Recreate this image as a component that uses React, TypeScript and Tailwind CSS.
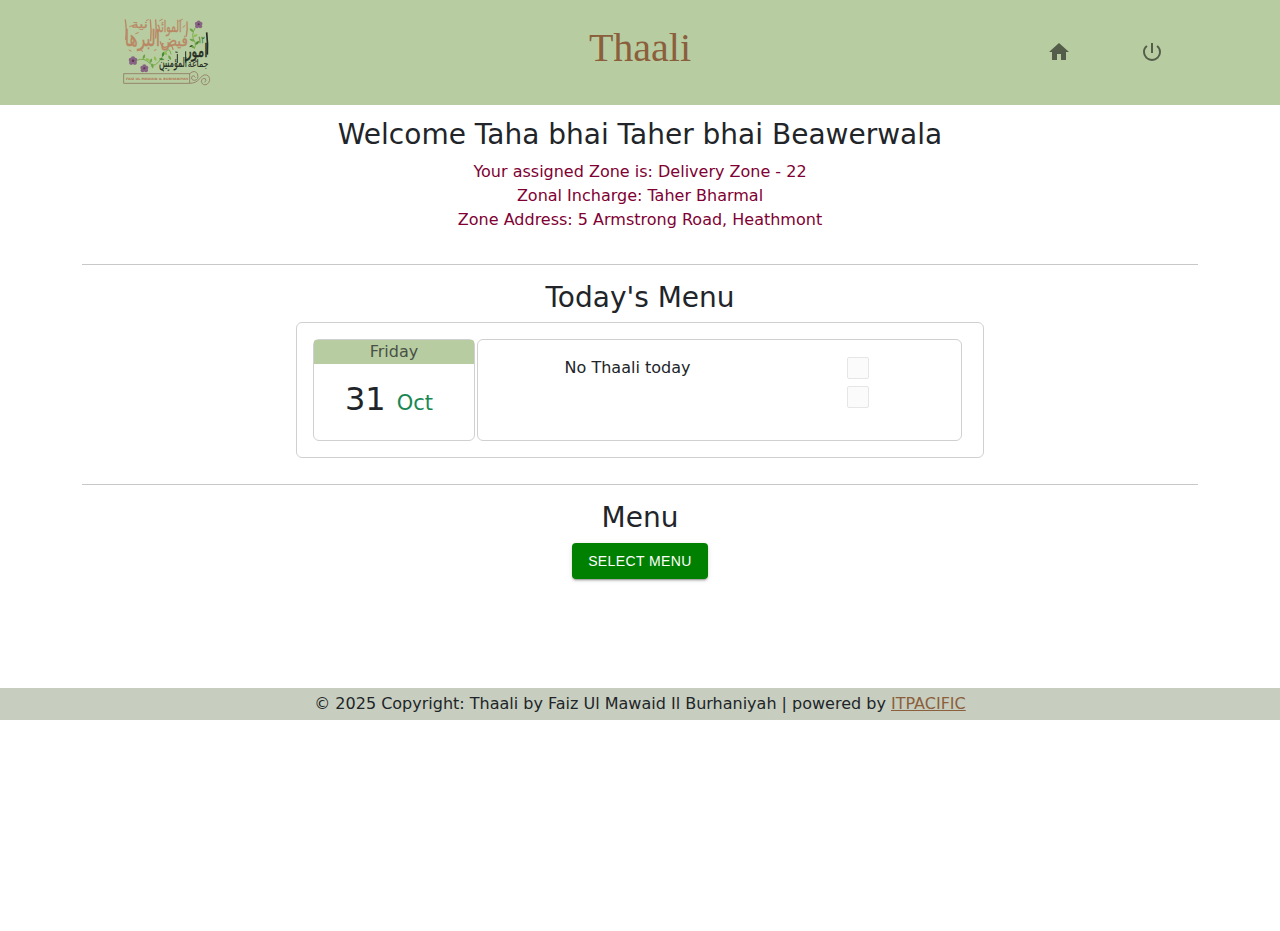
import type { ReactNode } from "react";
import { MdHome, MdPowerSettingsNew } from "react-icons/md";

function Flower({ x, y, s = 1 }: { x: number; y: number; s?: number }) {
  return (
    <g transform={`translate(${x} ${y}) scale(${s})`}>
      <g fill="#876482">
        <circle cx="0" cy="-6" r="6" />
        <circle cx="6" cy="-2" r="6" />
        <circle cx="5" cy="6" r="6" />
        <circle cx="-5" cy="6" r="6" />
        <circle cx="-6" cy="-2" r="6" />
      </g>
      <circle r="3.4" fill="#5d3558" />
    </g>
  );
}

function Leaf({ x, y, r, fill = "#6ba345" }: { x: number; y: number; r: number; fill?: string }) {
  return <path d="M0 0Q7 -8 0 -16Q-7 -8 0 0Z" fill={fill} transform={`translate(${x} ${y}) rotate(${r})`} />;
}

function Word({ x, y, w, size, fill, sy = 1, weight = 0.8, children }: { x: number; y: number; w: number; size: number; fill: string; sy?: number; weight?: number; children: ReactNode }) {
  return (
    <text
      transform={`translate(${x} ${y}) scale(1 ${sy})`}
      fontSize={size}
      fill={fill}
      stroke={fill}
      strokeWidth={weight}
      textAnchor="middle"
      textLength={w}
      lengthAdjust="spacingAndGlyphs"
      direction="rtl"
    >
      {children}
    </text>
  );
}

function Logo() {
  return (
    <svg viewBox="0 0 315 255" className="h-[85px] w-[105px]" fontFamily="'DejaVu Sans', sans-serif">
      <Word x={82} y={108} w={106} size={46} sy={1.45} fill="#ba8764">البرها</Word>
      <Word x={74} y={55} w={50} size={32} sy={1.05} fill="#ba8764">نية</Word>
      <Word x={162} y={66} w={76} size={36} sy={1.35} fill="#ba8764">الموائد</Word>
      <Word x={178} y={108} w={82} size={42} sy={1.15} fill="#ba8764">فيض</Word>
      <g fill="none" stroke="#ba8764" strokeWidth="4" strokeLinecap="round">
        <path d="M31 30Q36 62 32 88M106 30Q110 62 107 92M122 30Q125 60 122 84M216 36Q218 60 214 78" />
        <path d="M136 96Q142 118 157 110T174 118" />
        <path d="M42 120l6 3M78 121l5 3M118 121l5-2M192 34l10-6M44 50l7-3M62 71l8-3M94 32l6-3M134 32l8-4M204 52l6-5" strokeWidth="3" />
      </g>

      <g fill="none" stroke="#7aab4c" strokeWidth="3" strokeLinecap="round">
        <path d="M68 150Q88 142 104 160T142 140T168 132M240 54Q226 78 240 96Q244 106 238 116" />
      </g>
      <Leaf x={84} y={148} r={20} />
      <Leaf x={90} y={146} r={110} fill="#8cbd50" />
      <Leaf x={104} y={160} r={25} />
      <Leaf x={110} y={160} r={165} />
      <Leaf x={124} y={153} r={-25} fill="#8cbd50" />
      <Leaf x={132} y={146} r={100} fill="#458b35" />
      <Leaf x={142} y={141} r={15} fill="#458b35" />
      <Leaf x={156} y={136} r={-30} fill="#8cbd50" />
      <Leaf x={160} y={136} r={150} />
      <Leaf x={236} y={66} r={-50} />
      <Leaf x={234} y={80} r={65} fill="#8cbd50" />
      <Leaf x={238} y={94} r={-65} />
      <Leaf x={241} y={104} r={45} fill="#458b35" />
      <Leaf x={239} y={114} r={-55} />
      <Word x={259} y={98} w={20} size={28} fill="#397e32">١٢</Word>

      <Word x={245} y={142} w={66} size={43} sy={1.25} weight={1.2} fill="#252c22">امور</Word>
      <path d="M275 67Q279 101 277 134" fill="none" stroke="#252c22" strokeWidth="5" />
      <Word x={249} y={170} w={62} size={30} weight={0.5} fill="#252c22">جماعة</Word>
      <Word x={174} y={170} w={84} size={34} sy={1.2} weight={0.5} fill="#252c22">المؤمنين</Word>
      <path d="M187 132v27M212 124v34M142 181l5 2M158 181l5-1M181 126l7 1M224 110l8-3M240 153l8 1" fill="none" stroke="#252c22" strokeWidth="3" />

      <Flower x={251} y={43} s={0.95} />
      <Flower x={54} y={152} s={1.08} />
      <Flower x={88} y={175} />

      <g fill="none" stroke="#96866d" strokeWidth="3" strokeLinecap="round">
        <path d="M224 191H26V220H224V191Q239 178 247 191Q253 209 239 211Q226 210 231 199Q237 194 241 201" />
        <path d="M224 220Q244 220 254 206Q269 187 281 199Q289 212 276 223Q262 228 259 214Q261 203 271 206Q277 213 269 216" />
      </g>
      <text x="33" y="209" fontSize="9" fontWeight="700" fill="#b37758" textLength="187" lengthAdjust="spacingAndGlyphs">
        FAIZ UL MAWAID IL BURHANIYAH
      </text>
    </svg>
  );
}

function Heading({ children }: { children: ReactNode }) {
  return <h3 className="text-center text-[28px] leading-[34px] font-medium">{children}</h3>;
}

function DisabledCheckbox() {
  return <span className="block size-[22px] rounded-[2px] border border-[#e6e6e6] bg-[#fbfbfb]" />;
}

export default function App() {
  return (
    <div className="font-['DejaVu_Sans',sans-serif] text-base text-[#212529]">
      <header className="grid h-[105px] grid-cols-3 bg-[#b7cca0]">
        <div className="pt-[10px] pl-[115px]">
          <Logo />
        </div>
        <h1 className="pt-6 text-center font-['Liberation_Serif',serif] text-[40px] leading-[48px] text-[#8b5e3c]">Thaali</h1>
        <nav className="flex items-start justify-end gap-[69px] pt-10 pr-[116px] text-[#545d49]">
          <button aria-label="Home"><MdHome size={24} /></button>
          <button aria-label="Log out"><MdPowerSettingsNew size={24} /></button>
        </nav>
      </header>

      <main className="mx-auto h-[583px] w-[1116px] pt-3">
        <section className="h-[147px] pt-px">
          <Heading>Welcome Taha bhai Taher bhai Beawerwala</Heading>
          <div className="mt-2 text-center leading-6 text-[#800033]">
            <p>Your assigned Zone is: Delivery Zone - 22</p>
            <p>Zonal Incharge: Taher Bharmal</p>
            <p>Zone Address: 5 Armstrong Road, Heathmont</p>
          </div>
        </section>

        <section className="h-[220px] border-t border-[#c7c8c9] pt-4">
          <Heading>Today's Menu</Heading>
          <div className="mx-auto mt-[7px] flex h-[136px] w-[688px] gap-[2px] rounded-md border border-[#d0d0d0] p-4">
            <div className="h-[102px] w-[162px] rounded-md border border-[#d0d0d0]">
              <div className="rounded-t-[2px] bg-[#b7cca0] text-center leading-6 text-[#495047]">Friday</div>
              <div className="flex items-baseline gap-[11px] pt-[15px] pl-[31px]">
                <span className="text-[32px] leading-10">31</span>
                <span className="text-[21px] leading-10 text-[#198754]">Oct</span>
              </div>
            </div>
            <div className="flex h-[102px] w-[485px] rounded-md border border-[#d0d0d0] pt-4">
              <p className="w-[299px] text-center leading-6">No Thaali today</p>
              <div className="flex flex-col gap-[7px] pt-px pl-[70px]">
                <DisabledCheckbox />
                <DisabledCheckbox />
              </div>
            </div>
          </div>
        </section>

        <section className="flex flex-col items-center border-t border-[#c7c8c9] pt-4">
          <Heading>Menu</Heading>
          <button className="mt-2 h-9 w-[136px] rounded bg-[#008000] font-['Liberation_Sans',sans-serif] text-sm font-medium tracking-[0.4px] text-white shadow-[0_3px_1px_-2px_rgba(0,0,0,0.2),0_2px_2px_rgba(0,0,0,0.14),0_1px_5px_rgba(0,0,0,0.12)]">
            SELECT MENU
          </button>
        </section>
      </main>

      <footer className="h-8 bg-[#c7cebf] text-center leading-8">
        © 2025 Copyright: Thaali by Faiz Ul Mawaid Il Burhaniyah | powered by{" "}
        <a href="#" className="text-[#8b5e3c] underline">ITPACIFIC</a>
      </footer>
    </div>
  );
}
